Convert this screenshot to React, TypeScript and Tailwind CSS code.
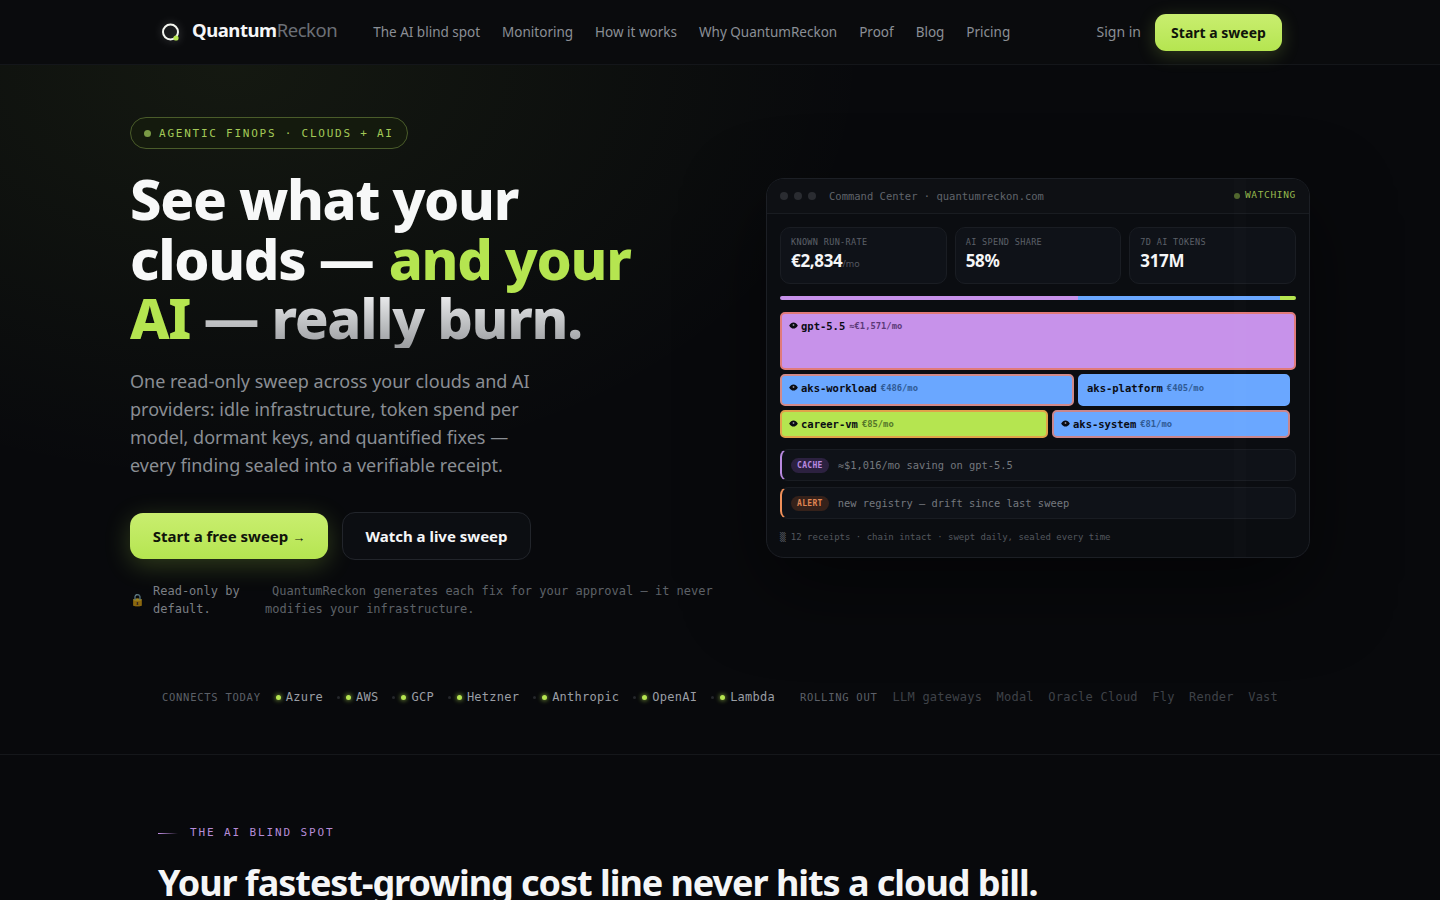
const sans = "font-['Noto_Sans','Liberation_Sans',sans-serif]";
const mono = "font-['DejaVu_Sans_Mono','Liberation_Mono',monospace]";

const navLinks = ["The AI blind spot", "Monitoring", "How it works", "Why QuantumReckon", "Proof", "Blog", "Pricing"];
const connects = ["Azure", "AWS", "GCP", "Hetzner", "Anthropic", "OpenAI", "Lambda"];
const rolling = ["LLM gateways", "Modal", "Oracle Cloud", "Fly", "Render", "Vast"];

function Logo() {
  return (
    <svg width="22" height="22" viewBox="0 0 22 22" fill="none" className="mt-px shrink-0 drop-shadow-[0_0_4px_rgba(255,255,255,0.3)]">
      <circle cx="12.5" cy="11" r="7.5" stroke="#f4f6f0" strokeWidth="2" />
      <circle cx="18" cy="17" r="2.6" fill="#b5e550" />
    </svg>
  );
}

function EyeIcon() {
  return (
    <svg width="9" height="7" viewBox="0 0 9 7" className="mr-[3px] mt-[8px] shrink-0">
      <path d="M0.2 3.5C1.4 1.3 2.8 0.4 4.5 0.4S7.6 1.3 8.8 3.5C7.6 5.7 6.2 6.6 4.5 6.6S1.4 5.7 0.2 3.5Z" fill="#0a0c14" />
      <circle cx="4.5" cy="3" r="0.9" fill="#8d8a99" />
    </svg>
  );
}

function Stat({ label, value, unit }: { label: string; value: string; unit?: string }) {
  return (
    <div className="flex-1 h-[57px] rounded-[10px] border border-[#1a1d23] bg-[#0f1218] pl-[10px] pt-[9px]">
      <div className={`${mono} text-[8.5px] leading-[11px] tracking-[0.04em] text-[#5c6068]`}>{label}</div>
      <div className={`${sans} mt-px text-[17px] leading-[24px] font-bold tracking-[-0.02em] text-[#f5f6f7]`}>
        {value}
        {unit && <span className="text-[9px] font-normal tracking-normal text-[#555962]">{unit}</span>}
      </div>
    </div>
  );
}

function Tile({
  name,
  cost,
  eye = true,
  className,
  costColor,
}: {
  name: string;
  cost: string;
  eye?: boolean;
  className: string;
  costColor: string;
}) {
  return (
    <div className={`${mono} flex items-start rounded-[5px] border-2 pl-[7px] ${className}`}>
      {eye && <EyeIcon />}
      <span className="text-[10.5px] leading-[24px] font-bold text-[#0a0c14]">{name}</span>
      <span className={`ml-[4px] text-[8.8px] leading-[24px] font-bold ${costColor}`}>{cost}</span>
    </div>
  );
}

function Note({
  tag,
  text,
  accent,
  tagClass,
}: {
  tag: string;
  text: string;
  accent: string;
  tagClass: string;
}) {
  return (
    <div className={`flex h-[32px] items-center rounded-[8px] border border-[#191c22] border-l-2 ${accent} bg-[#0f1218] pl-[9px]`}>
      <span className={`${mono} rounded-full px-[6px] text-[8px] leading-[15px] font-bold tracking-[0.04em] ${tagClass}`}>{tag}</span>
      <span className={`${mono} ml-[9px] mt-[2px] text-[10.4px] text-[#74787e]`}>{text}</span>
    </div>
  );
}

function CommandCenter() {
  return (
    <div className="relative h-[380px] w-[544px] overflow-hidden rounded-[18px] border border-[#1c1f25] bg-[#0b0d11] shadow-[0_30px_80px_rgba(0,0,0,0.5)]">
      <div className="absolute inset-y-0 left-[467px] w-[12px] bg-white/[0.012]" />
      <div className="flex h-[35px] items-center border-b border-[#191c21] bg-[#0e1014] pl-[13px] pr-[13px]">
        <span className="h-[8px] w-[8px] rounded-full bg-[#2a2c31]" />
        <span className="ml-[6px] h-[8px] w-[8px] rounded-full bg-[#2a2c31]" />
        <span className="ml-[6px] h-[8px] w-[8px] rounded-full bg-[#2a2c31]" />
        <span className={`${mono} ml-[13px] mt-[2px] text-[10.5px] text-[#60646b]`}>Command Center · quantumreckon.com</span>
        <span className="ml-auto h-[6px] w-[6px] rounded-full bg-[#4f662c]" />
        <span className={`${mono} mb-[2px] ml-[5px] text-[9.5px] tracking-[0.07em] text-[#97b84d]`}>WATCHING</span>
      </div>

      <div className="px-[13px] pt-[13px]">
        <div className="flex gap-[8px]">
          <Stat label="KNOWN RUN-RATE" value="€2,834" unit="/mo" />
          <Stat label="AI SPEND SHARE" value="58%" />
          <Stat label="7D AI TOKENS" value="317M" />
        </div>

        <div className="mt-[12px] flex h-[4px] overflow-hidden rounded-full">
          <div className="w-[298px] bg-[#c792ea]" />
          <div className="w-[202px] bg-[#6aa7ff]" />
          <div className="flex-1 bg-[#b5e550]" />
        </div>

        <div className="mt-[12px] flex flex-col gap-[4px]">
          <Tile
            name="gpt-5.5"
            cost="≈€1,571/mo"
            className="h-[58px] border-[#e07a7a] bg-[#c792ea]"
            costColor="text-[#5c3a78]"
          />
          <div className="flex gap-[4px] pr-[6px]">
            <Tile
              name="aks-workload"
              cost="€486/mo"
              className="h-[32px] w-[294px] border-[#d08a8a] bg-[#6aa7ff]"
              costColor="text-[#2f5a94]"
            />
            <Tile
              name="aks-platform"
              cost="€405/mo"
              eye={false}
              className="h-[32px] flex-1 border-[#6aa7ff] bg-[#6aa7ff]"
              costColor="text-[#2f5a94]"
            />
          </div>
          <div className="flex gap-[4px] pr-[6px]">
            <Tile
              name="career-vm"
              cost="€85/mo"
              className="h-[28px] w-[268px] border-[#e0a24a] bg-[#b5e550]"
              costColor="text-[#55752a]"
            />
            <Tile
              name="aks-system"
              cost="€81/mo"
              className="h-[28px] flex-1 border-[#c9868c] bg-[#6aa7ff]"
              costColor="text-[#2f5a94]"
            />
          </div>
        </div>

        <div className="mt-[11px] flex flex-col gap-[6px]">
          <Note
            tag="CACHE"
            text="≈$1,016/mo saving on gpt-5.5"
            accent="border-l-[#b98ae0]"
            tagClass="bg-[#2c2140] text-[#b98ae0]"
          />
          <Note
            tag="ALERT"
            text="new registry — drift since last sweep"
            accent="border-l-[#f0905a]"
            tagClass="bg-[#35211a] text-[#e08654]"
          />
        </div>

        <div className={`${mono} mt-[12px] text-[9px] leading-[12px] text-[#53575e]`}>
          ▒ 12 receipts · chain intact · swept daily, sealed every time
        </div>
      </div>
    </div>
  );
}

export default function App() {
  return (
    <div className={`${sans} h-[900px] overflow-hidden bg-[#08090c] text-white`}>
      <header className="h-[65px] border-b border-[#14161a] bg-[#0a0b0d]">
        <div className="mx-auto flex h-[63px] w-[1124px] items-center">
          <Logo />
          <span className="mb-[3px] ml-[12px] text-[18.5px] font-bold tracking-[-0.025em] text-[#f5f6f7]">
            Quantum<span className="font-normal text-[#6c7077]">Reckon</span>
          </span>
          <nav className="ml-[36px] mt-[2px] flex gap-[22px] text-[13.5px] text-[#8b8f96]">
            {navLinks.map((link) => (
              <a key={link}>{link}</a>
            ))}
          </nav>
          <a className="ml-auto text-[14px] text-[#8b8f96]">Sign in</a>
          <button className="ml-[14px] mt-[2px] h-[37px] w-[127px] rounded-[11px] bg-gradient-to-b from-[#c9ee6f] to-[#b5e550] text-[14px] font-bold text-[#10140a] shadow-[0_4px_18px_rgba(181,229,80,0.22)]">
            Start a sweep
          </button>
        </div>
      </header>

      <section className="bg-[radial-gradient(ellipse_640px_420px_at_16%_0%,rgba(181,229,80,0.07),transparent_100%)]">
        <div className="mx-auto grid h-[590px] w-[1180px] grid-cols-[582px_544px] gap-[54px]">
          <div className="pt-[52px]">
            <div className={`${mono} flex h-[32px] w-[278px] items-center rounded-full border border-[#4a5c2a] bg-[#141a0d] pl-[13px] text-[11px] tracking-[0.16em] text-[#a3c957]`}>
              <span className="mr-[8px] h-[7px] w-[7px] rounded-full bg-[#7a9a45]" />
              <span className="mt-[2px]">AGENTIC FINOPS · CLOUDS + AI</span>
            </div>
            <h1 className="mt-[20px] text-[56px] leading-[59.5px] font-extrabold tracking-[-0.023em] text-[#f7f8f8]">
              See what your
              <br />
              clouds — <span className="ml-[2px] text-[#b5e550]">and your</span>
              <br />
              <span className="text-[#b5e550]">AI</span>{" "}
              <span className="inline-block bg-gradient-to-b from-[#f5f6f7] to-[#9a9c9f] bg-clip-text text-transparent">
                — really burn.
              </span>
            </h1>
            <p className="mt-[19px] w-[410px] text-[18px] leading-[28px] text-[#8a8e94]">
              One read-only sweep across your clouds and AI providers: idle infrastructure, token spend per model,
              dormant keys, and quantified fixes — every finding sealed into a verifiable receipt.
            </p>
            <div className="mt-[33px] flex items-center gap-[14px]">
              <button className="h-[46px] w-[198px] rounded-[13px] bg-gradient-to-b from-[#c9ee6f] to-[#b5e550] pt-px text-[15px] font-bold text-[#10140a] shadow-[0_6px_26px_rgba(181,229,80,0.24)]">
                Start a free sweep <span className="text-[13px] font-normal">→</span>
              </button>
              <button className="h-[48px] w-[189px] rounded-[13px] border border-[#22252b] bg-[#0c0e12] pt-px text-[15px] font-bold text-[#f5f6f7]">
                Watch a live sweep
              </button>
            </div>
            <div className={`${mono} mt-[22px] flex w-[600px] items-center text-[12px] leading-[18px] text-[#5e6268]`}>
              <span className="w-[23px] shrink-0 text-[12px] opacity-60">🔒</span>
              <span className="w-[112px] shrink-0 text-[#7b7f85]">Read-only by default.</span>
              <span className="w-[455px] indent-[7px]">
                QuantumReckon generates each fix for your approval — it never modifies your infrastructure.
              </span>
            </div>
          </div>
          <div className="pt-[113px]">
            <CommandCenter />
          </div>
        </div>
      </section>

      <div className={`${mono} flex h-[99px] justify-center pt-[33px] text-[12px] leading-[18px] tracking-[0.02em]`}>
        <div className="flex h-[18px] items-center">
          <span className="mr-[15px] text-[10.5px] tracking-[0.07em] text-[#5c6068]">CONNECTS TODAY</span>
          {connects.map((c, i) => (
            <span key={c} className="flex items-center text-[#9a9ea4]">
              {i > 0 && <span className="ml-[14px] mr-[6px] h-[3px] w-[3px] rounded-full bg-[#26282c]" />}
              <span className="mr-[5px] h-[5px] w-[5px] rounded-full bg-[#b5e550] shadow-[0_0_5px_#b5e550]" />
              {c}
            </span>
          ))}
          <span className="ml-[25px] mr-[15px] text-[10.5px] tracking-[0.07em] text-[#5c6068]">ROLLING OUT</span>
          <div className="flex gap-[14.4px] text-[#3f4248]">
            {rolling.map((r) => (
              <span key={r}>{r}</span>
            ))}
          </div>
        </div>
      </div>

      <section className="border-t border-[#15171b]">
        <div className="mx-auto w-[1124px] pt-[71px]">
          <div className={`${mono} flex items-center text-[11px] leading-[14px] tracking-[0.17em] text-[#b68cd8]`}>
            <span className="mr-[12px] h-px w-[20px] bg-gradient-to-r from-[#c792ea] to-transparent" />
            THE AI BLIND SPOT
          </div>
          <h2 className="mt-[21px] text-[36px] leading-[44px] font-bold tracking-[-0.029em] text-[#f5f6f7]">
            Your fastest-growing cost line never hits a cloud bill.
          </h2>
        </div>
      </section>
    </div>
  );
}
